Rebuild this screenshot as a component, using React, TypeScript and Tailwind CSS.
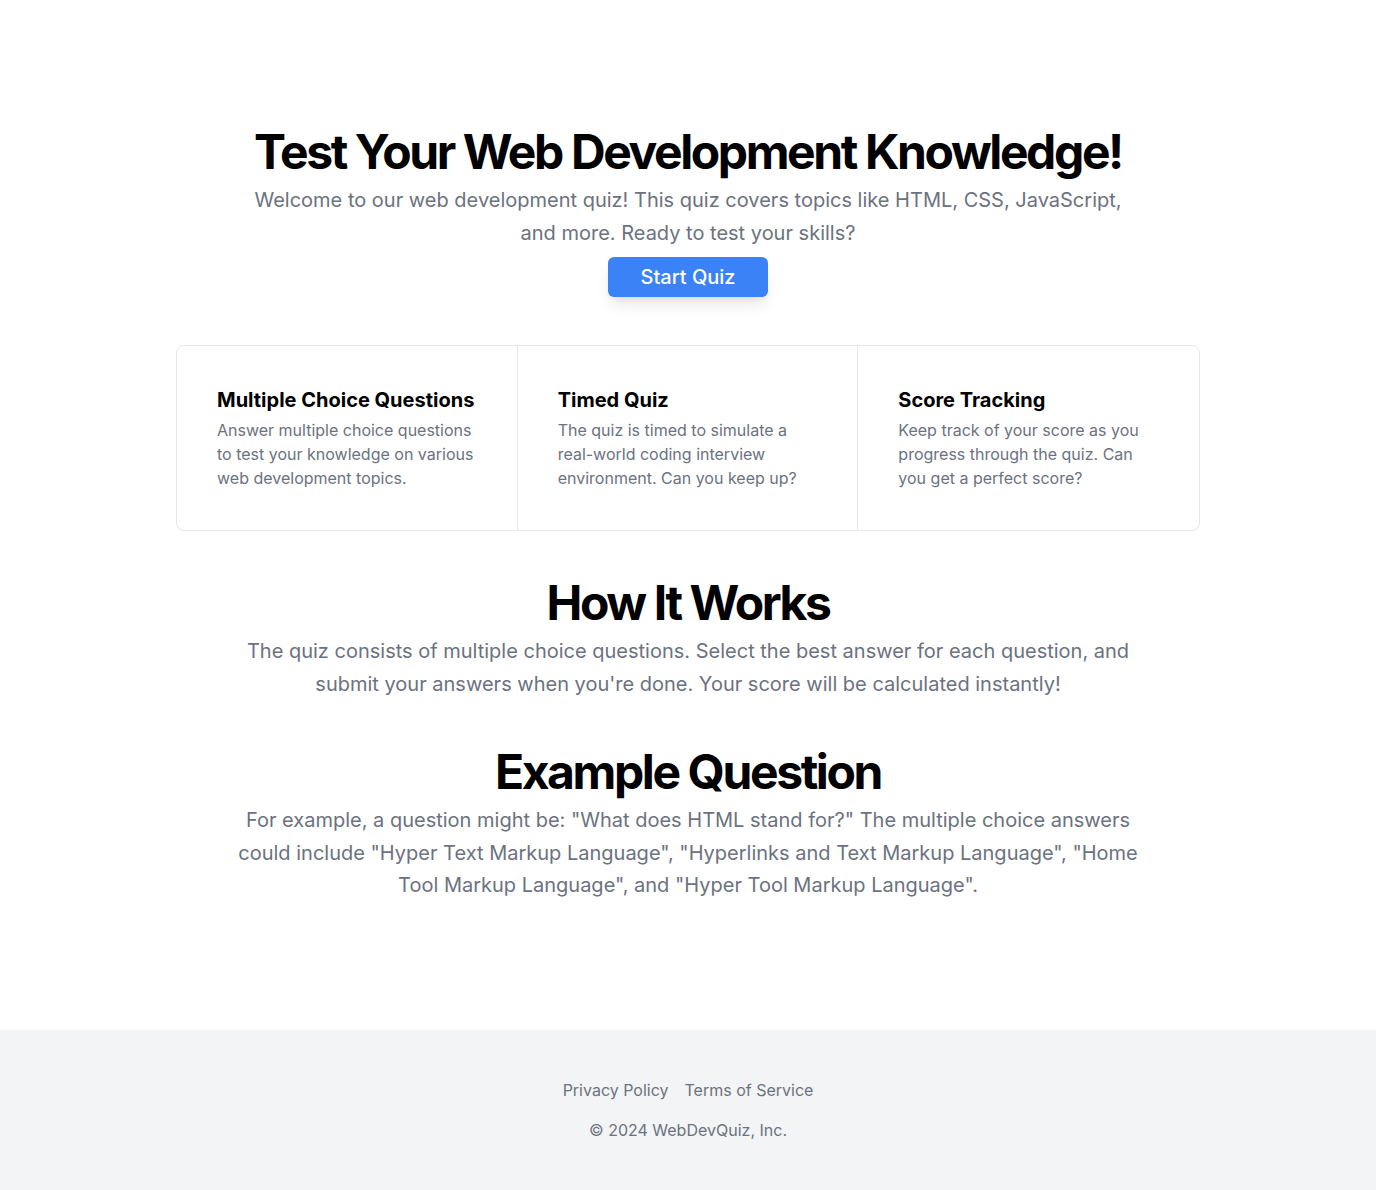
import React from 'react';

const features = [
  {
    title: 'Multiple Choice Questions',
    text: 'Answer multiple choice questions to test your knowledge on various web development topics.',
  },
  {
    title: 'Timed Quiz',
    text: 'The quiz is timed to simulate a real-world coding interview environment. Can you keep up?',
  },
  {
    title: 'Score Tracking',
    text: 'Keep track of your score as you progress through the quiz. Can you get a perfect score?',
  },
];

const App: React.FC = () => {
  return (
    <div className="min-h-screen flex flex-col bg-white font-['Inter',sans-serif]">
      <main className="flex flex-col items-center gap-12 py-32 px-4">
        <section className="flex flex-col items-center gap-2 text-center">
          <h1 className="text-5xl font-bold tracking-tighter text-black">Test Your Web Development Knowledge!</h1>
          <p className="max-w-[900px] text-xl leading-relaxed text-[#6b7280]">
            Welcome to our web development quiz! This quiz covers topics like HTML, CSS, JavaScript, and more. Ready to test your skills?
          </p>
          <button className="h-10 px-8 rounded-md bg-[#3b82f6] text-xl font-medium leading-none text-white shadow-lg">Start Quiz</button>
        </section>

        <section className="grid w-full max-w-5xl grid-cols-3 divide-x divide-[#e5e7eb] rounded-lg border border-[#e5e7eb]">
          {features.map((f) => (
            <div key={f.title} className="flex flex-col gap-1 p-10">
              <h3 className="text-xl font-bold text-black">{f.title}</h3>
              <p className="text-base leading-6 text-[#6b7280]">{f.text}</p>
            </div>
          ))}
        </section>

        <section className="flex flex-col items-center gap-2 text-center">
          <h2 className="text-5xl font-bold tracking-tighter text-black">How It Works</h2>
          <p className="max-w-[900px] text-xl leading-relaxed text-[#6b7280]">
            The quiz consists of multiple choice questions. Select the best answer for each question, and submit your answers when you're done. Your score will be calculated instantly!
          </p>
        </section>

        <section className="flex flex-col items-center gap-2 text-center">
          <h2 className="text-5xl font-bold tracking-tighter text-black">Example Question</h2>
          <p className="max-w-[900px] text-xl leading-relaxed text-[#6b7280]">
            For example, a question might be: "What does HTML stand for?" The multiple choice answers could include "Hyper Text Markup Language", "Hyperlinks and Text Markup Language", "Home Tool Markup Language", and "Hyper Tool Markup Language".
          </p>
        </section>
      </main>

      <footer className="mt-auto bg-[#f3f4f6] py-12 text-center text-[#6b7280]">
        <nav className="flex justify-center gap-4">
          <a href="#">Privacy Policy</a>
          <a href="#">Terms of Service</a>
        </nav>
        <p className="mt-4">© 2024 WebDevQuiz, Inc.</p>
      </footer>
    </div>
  );
};

export default App;
